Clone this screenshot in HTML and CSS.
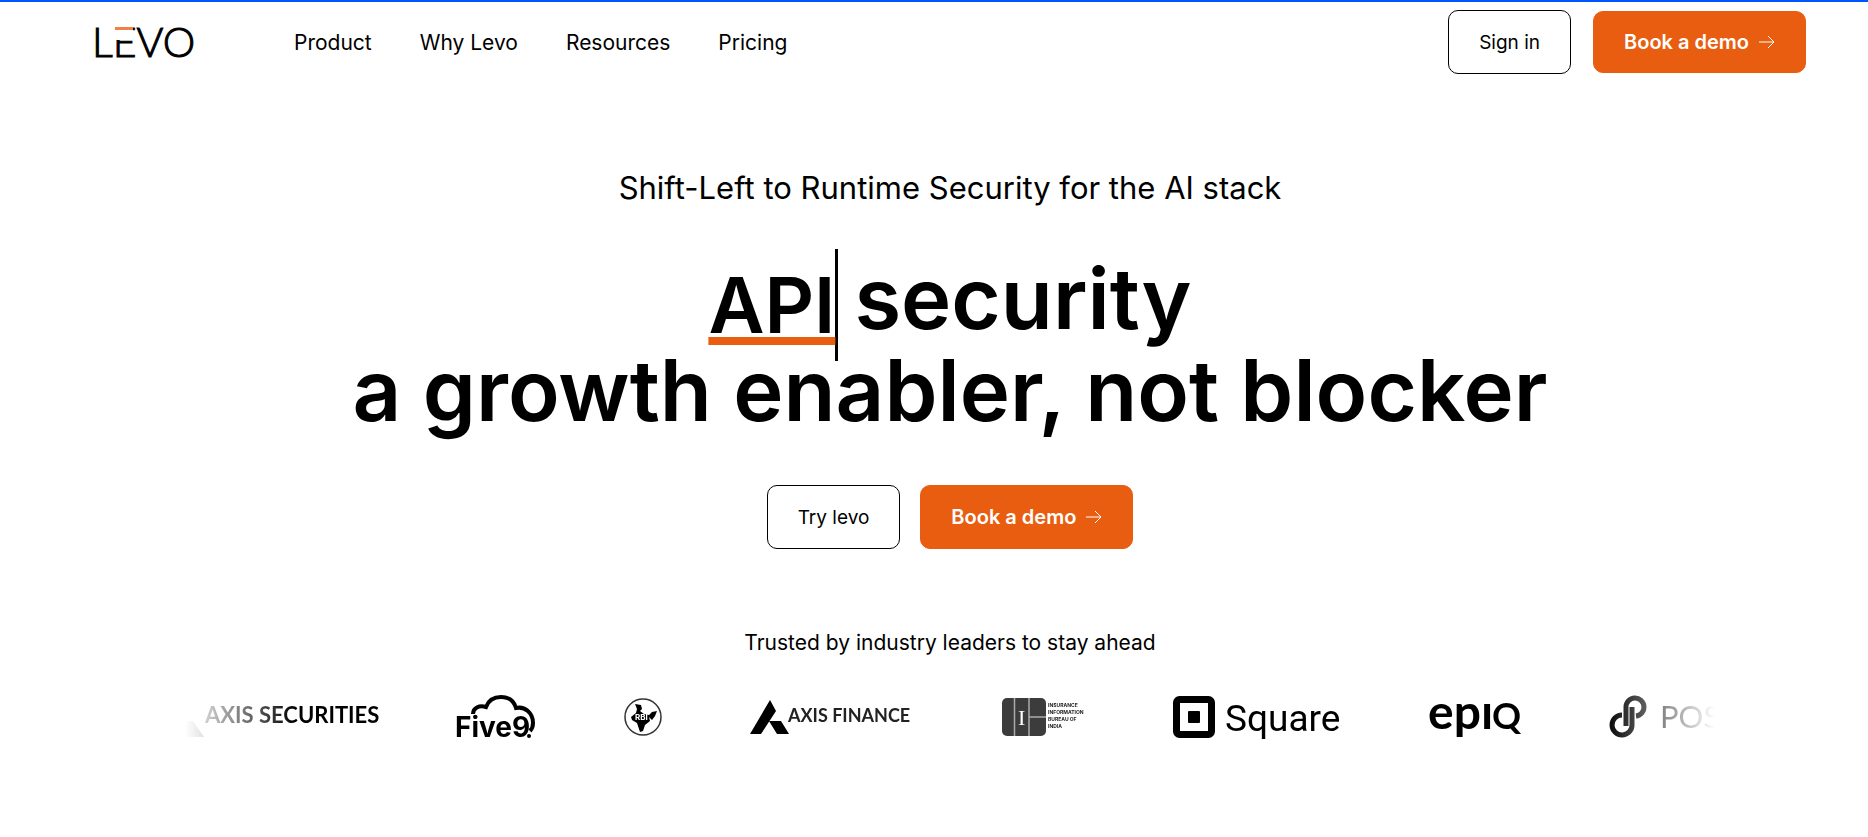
FILE: index.html
```
<!DOCTYPE html>
<html lang="en">
<head>
    <meta charset="UTF-8">
    <meta name="viewport" content="width=device-width, initial-scale=1.0">
    <title>Levo</title>
    <link rel="stylesheet" href="styles.css">
</head>
<body>
<header class="header">
    <a class="brand" href="#" aria-label="Levo home">
        <svg width="108" height="56" viewBox="0 0 108 56">
            <text class="brand-text" x="0" y="43">LEVO</text>
            <rect x="20" y="11" width="21" height="15" fill="#fff"/>
            <rect x="23" y="13" width="18" height="3" fill="#f08048"/>
        </svg>
    </a>
    <nav class="nav">
        <a href="#">Product</a>
        <a href="#">Why Levo</a>
        <a href="#">Resources</a>
        <a href="#">Pricing</a>
    </nav>
    <div class="header-actions">
        <button class="btn btn-outline" type="button">Sign in</button>
        <button class="btn btn-primary" type="button">Book a demo
            <svg class="arrow" width="16" height="14" viewBox="0 0 16 14"><path d="M0 7H15M9 1L15 7L9 13"/></svg>
        </button>
    </div>
</header>

<main class="hero">
    <p class="tagline">Shift-Left to Runtime Security for the AI stack</p>
    <h1 class="headline">
        <span class="headline-row"><span class="typed">API</span> <span>security</span></span>
        <span class="headline-row">a growth enabler, not blocker</span>
    </h1>
    <div class="hero-actions">
        <button class="btn btn-outline" type="button">Try levo</button>
        <button class="btn btn-primary" type="button">Book a demo
            <svg class="arrow" width="16" height="14" viewBox="0 0 16 14"><path d="M0 7H15M9 1L15 7L9 13"/></svg>
        </button>
    </div>

    <p class="trusted">Trusted by industry leaders to stay ahead</p>
    <div class="logos">
        <!-- Axis Securities -->
        <svg width="192" height="56" viewBox="0 0 192 56">
            <path d="M0 31H8L19 47H0Z" fill="#555"/>
            <text class="t-axis-sec" x="20" y="33">AXIS SECURITIES</text>
        </svg>
        <!-- Five9 -->
        <svg width="85" height="56" viewBox="0 0 85 56">
            <path d="M18 24C18 18 24 15 31 17C34 9 40 7 46 7C54 7 59 11 61 18C70 16 78 23 78 33C78 37 77 39 75 41" fill="none" stroke="#000" stroke-width="4"/>
            <text class="t-five" x="0" y="47">Five9</text>
            <circle cx="74" cy="46" r="2"/>
        </svg>
        <!-- Reserve Bank -->
        <svg width="48" height="56" viewBox="0 0 48 56">
            <circle cx="25" cy="27" r="18" fill="#fff" stroke="#333" stroke-width="1.500"/>
            <path d="M17 14L23 15L24 19L22 21L26 24L31 25L34 22L39 21L37 26L34 30L31 27L32 31L27 35L25 41L22 42L19 33L14 30L13 27L18 23L19 19Z"/>
            <text class="t-rbi" x="17" y="30">RBI</text>
        </svg>
        <!-- Axis Finance -->
        <svg width="174" height="56" viewBox="0 0 174 56">
            <path d="M26 10L32 21L17 44H6ZM25 31H37L45 44H33Z"/>
            <text class="t-axis-fin" x="44" y="32">AXIS FINANCE</text>
        </svg>
        <!-- Insurance Information Bureau -->
        <svg width="96" height="56" viewBox="0 0 96 56">
            <rect x="6" y="8" width="44" height="38" rx="5" fill="#3c3c3c"/>
            <path d="M18.500 8V46M33 8V46M33 27H50" stroke="#aaa" stroke-width="1.500"/>
            <text class="t-iib-mark" x="22" y="35">I</text>
            <text class="t-iib" x="52" y="17">INSURANCE</text>
            <text class="t-iib" x="52" y="24">INFORMATION</text>
            <text class="t-iib" x="52" y="31">BUREAU OF</text>
            <text class="t-iib" x="52" y="38">INDIA</text>
        </svg>
        <!-- Square -->
        <svg width="174" height="56" viewBox="0 0 174 56">
            <rect x="6.500" y="9.500" width="35" height="35" rx="3" fill="none" stroke="#000" stroke-width="7"/>
            <rect x="18" y="21" width="12" height="12" rx="1"/>
            <text class="t-square" x="55" y="41">Square</text>
        </svg>
        <!-- Epiq -->
        <svg width="104" height="56" viewBox="0 0 104 56">
            <text class="t-epiq" x="6" y="39">epı</text>
            <text class="t-epiq-q" x="70" y="39">Q</text>
        </svg>
        <!-- Postman -->
        <svg width="200" height="56" viewBox="0 0 200 56">
            <g fill="none" stroke="#000" stroke-width="5">
                <path d="M22 36V17A9 9 0 1 1 32 26"/>
                <path d="M28 17V34A10 10 0 1 1 18 25"/>
            </g>
            <text class="t-post" x="56" y="38">POSTMAN</text>
        </svg>
    </div>
</main>
</body>
</html>
```
FILE: styles.css
```
* {
    box-sizing: border-box;
}

body {
    margin: 0;
    border-top: 2px solid #0055ff;
    background-color: #ffffff;
    color: #000000;
    font-family: Inter, "Liberation Sans", sans-serif;
    font-size: 21px;
    overflow-x: hidden;
}

.header {
    display: flex;
    align-items: center;
    height: 80px;
    padding: 0 62px 0 92px;
}

.brand {
    display: flex;
    margin-right: 94px;
}

.brand-text {
    stroke: #000000;
    stroke-width: 1px;
    font-family: Lato, sans-serif;
    font-size: 41px;
    font-weight: 300;
}

.nav {
    display: flex;
    gap: 48px;
}

.nav a {
    color: #000000;
    text-decoration: none;
}

.header-actions {
    display: flex;
    align-items: center;
    gap: 22px;
    margin-left: auto;
}

.btn {
    display: flex;
    align-items: center;
    height: 64px;
    padding: 0 30px;
    border: 1px solid #000000;
    border-radius: 10px;
    background-color: #ffffff;
    color: #000000;
    font-family: inherit;
    font-size: 19px;
    cursor: pointer;
}

.btn-primary {
    gap: 10px;
    border-color: #e85d10;
    background-color: #e85d10;
    color: #ffffff;
    font-size: 20px;
    font-weight: 600;
}

.header .btn-primary {
    height: 62px;
}

.arrow {
    fill: none;
    stroke: #ffffff;
    stroke-width: 1;
}

.hero {
    display: flex;
    flex-direction: column;
    align-items: center;
    padding: 82px 0 0 32px;
}

.tagline {
    margin: 0;
    font-size: 31px;
    line-height: 48px;
}

.headline {
    margin: 41px 0 48px;
    font-size: 85px;
    font-weight: 600;
    line-height: 92px;
}

.headline-row {
    display: flex;
    justify-content: center;
    align-items: flex-start;
    gap: 16px;
    white-space: nowrap;
}

.typed {
    margin: -4px 0 -16px;
    border-right: 3px solid #000000;
    font-size: 77px;
    line-height: 112px;
    text-decoration: underline 8px #e85d10;
    text-underline-offset: 4px;
    text-decoration-skip-ink: none;
}

.hero-actions {
    display: flex;
    gap: 20px;
}

.trusted {
    margin: 80px 0 29px;
    line-height: 28px;
}

.logos {
    display: flex;
    gap: 78px;
    width: calc(100% - 306px);
    padding: 4px 0;
    overflow: hidden;
    mask-image: linear-gradient(to right, transparent, #000 110px, #000 calc(100% - 110px), transparent);
}

.logos svg {
    flex-shrink: 0;
    overflow: visible;
}

.t-axis-sec {
    font: 700 22px Lato, sans-serif;
}

.t-five {
    font: 700 28px Inter, sans-serif;
}

.t-rbi {
    fill: #ffffff;
    font: 700 8px Inter, sans-serif;
}

.t-axis-fin {
    fill: #222222;
    font: 700 18px Lato, sans-serif;
}

.t-iib-mark {
    fill: #ffffff;
    font: 400 22px "Liberation Serif", serif;
}

.t-iib {
    fill: #222222;
    font: 700 5px Inter, sans-serif;
}

.t-square {
    font: 400 37px Roboto, sans-serif;
}

.t-epiq {
    font: 700 48px Lato, sans-serif;
}

.t-epiq-q {
    font: 700 36px Lato, sans-serif;
}

.t-post {
    font: 400 31px Lato, sans-serif;
}
```
